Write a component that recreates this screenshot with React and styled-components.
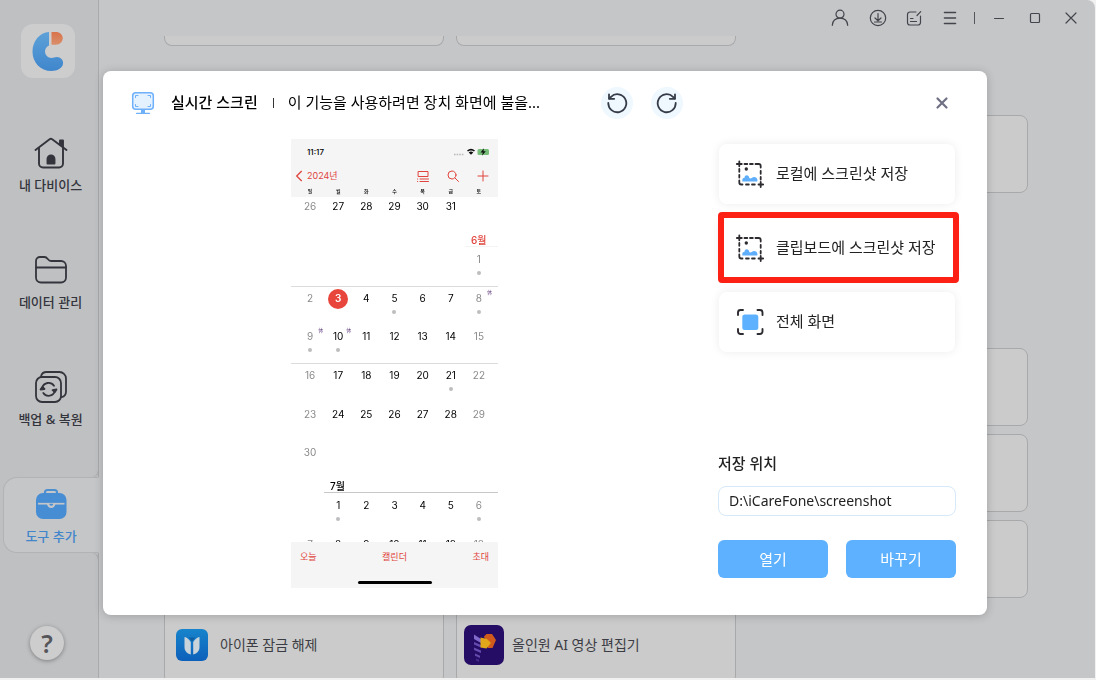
import React from 'react';
import styled, { createGlobalStyle, css } from 'styled-components';

const ui = `"Noto Sans", "Noto Sans CJK KR", sans-serif`;
const ios = `Inter, "Noto Sans CJK KR", sans-serif`;

const GlobalStyle = createGlobalStyle`
  *, *::before, *::after { box-sizing: border-box; }
  body { margin: 0; background: #f1f1f1; font-family: ${ui}; color: #222; }
  button, input { font: inherit; color: inherit; }
  button { padding: 0; border: 0; background: none; cursor: pointer; }
  svg { display: block; flex: none; }
`;

/* ---------- application window ---------- */

const Shell = styled.div`
  display: flex;
  height: calc(100vh - 2px);
  margin-right: 1px;
  overflow: hidden;
  border-top-right-radius: 8px;
  background: #c5c6c8;
`;

const Sidebar = styled.nav`
  display: flex;
  flex-direction: column;
  flex: none;
  width: 99px;
  padding: 24px 0 18px 3px;
  border-right: 1px solid #a9aaac;
  background: #bfc0c2;
`;

const Logo = styled.div`
  display: grid;
  place-items: center;
  width: 54px;
  height: 54px;
  margin: 0 0 48px 18px;
  border-radius: 12px;
  background: #cdcdce;
`;

const NavList = styled.div`
  display: flex;
  flex-direction: column;
  gap: 41px;
`;

const activeTab = css`
  margin-right: -1px;
  border-color: #b2b3b5;
  border-right-color: transparent;
  border-radius: 14px 0 0 14px;
  background: #c5c6c8;
  color: #4185cb;

  &::before, &::after {
    content: '';
    position: absolute;
    right: -1px;
    width: 8px;
    height: 8px;
    border-right: 1px solid #a9aaac;
    background: #bfc0c2;
  }
  &::before { top: -8px; border-bottom: 1px solid #b2b3b5; border-bottom-right-radius: 8px; }
  &::after { bottom: -8px; border-top: 1px solid #b2b3b5; border-top-right-radius: 8px; }
`;

const NavItem = styled.button`
  position: relative;
  display: flex;
  flex-direction: column;
  align-items: center;
  gap: 4px;
  height: 76px;
  padding-top: 8px;
  border: 1px solid transparent;
  color: #33343c;
  font-size: 13px;
  font-weight: 500;
  line-height: 20px;
  white-space: nowrap;
  ${p => p.$active && activeTab}
`;

const HelpButton = styled.button`
  width: 34px;
  height: 34px;
  margin-top: auto;
  margin-left: 27px;
  border-radius: 50%;
  background: #cdcdce;
  box-shadow: 0 1px 4px rgba(0, 0, 0, 0.35);
  color: #55565a;
  font-size: 25px;
  font-weight: 600;
  line-height: 34px;
`;

const Main = styled.main`
  display: flex;
  flex: 1;
  flex-direction: column;
  min-width: 0;
`;

const TitleBar = styled.header`
  display: flex;
  flex: none;
  justify-content: flex-end;
  align-items: center;
  height: 36px;
  padding-right: 6px;
  color: #44454c;
`;

const WindowButton = styled.button`
  display: grid;
  place-items: center;
  width: ${p => (p.$wide ? 40 : 36)}px;
  height: 36px;
`;

const BarDivider = styled.span`
  width: 1px;
  height: 12px;
  margin: 0 6px;
  background: #55565c;
`;

const ToolArea = styled.div`
  display: flex;
  flex: 1;
  flex-direction: column;
  gap: 69px;
  min-height: 0;
  overflow: hidden;
  padding: 0 67px 0 65px;
`;

const ToolGrid = styled.section`
  display: grid;
  flex: none;
  grid-template-columns: repeat(3, 1fr);
  gap: 8px 12px;
`;

const ToolCard = styled.div`
  display: flex;
  align-items: center;
  height: 78px;
  border: 1px solid #a8a9ab;
  border-radius: 8px;
  background: #cbcbcb;
  color: #3c3d44;
  font-size: 14px;
  line-height: 20px;
  ${p => p.$cut && css`
    height: 10px;
    border-top: 0;
    border-radius: 0 0 8px 8px;
  `}
`;

const ToolIcon = styled.span`
  display: flex;
  justify-content: center;
  width: 55px;
  padding-right: 1px;
`;

/* ---------- dialog ---------- */

const Overlay = styled.div`
  position: fixed;
  inset: 0;
  display: flex;
  align-items: flex-start;
  padding: 71px 109px 0 103px;
`;

const Dialog = styled.section`
  flex: 1;
  min-width: 0;
  border-radius: 8px;
  background: #fff;
  box-shadow: 0 1px 10px rgba(0, 0, 0, 0.2);
`;

const DialogHeader = styled.header`
  display: flex;
  align-items: center;
  height: 64px;
  padding: 0 35px 0 28px;
  color: #000;
  font-size: 15px;
  line-height: 22px;
  white-space: nowrap;
`;

const DialogTitle = styled.h1`
  margin: 0 15px 0 16px;
  padding-bottom: 2px;
  font-size: 15px;
  font-weight: 500;
`;

const TitleDivider = styled.span`
  width: 1px;
  height: 10px;
  margin-right: 14px;
  background: #333;
`;

const Notice = styled.p`
  width: 313px;
  margin: 0;
  padding-bottom: 2px;
`;

const RotateButton = styled.button`
  display: grid;
  place-items: center;
  width: 32px;
  height: 32px;
  margin-right: 18px;
  border-radius: 50%;
  background: #eff7ff;
`;

const CloseButton = styled.button`
  display: grid;
  place-items: center;
  width: 20px;
  height: 20px;
  margin-left: auto;
`;

const DialogBody = styled.div`
  display: flex;
  gap: 32px;
`;

const Stage = styled.div`
  display: flex;
  flex: 1;
  justify-content: center;
  padding: 4px 0 27px;
`;

const SidePanel = styled.div`
  display: flex;
  flex: none;
  flex-direction: column;
  justify-content: space-between;
  width: 269px;
  padding: 9px 31px 37px 0;
`;

const ActionList = styled.div`
  display: flex;
  flex-direction: column;
  gap: 14px;
  padding: 0 1px;
`;

const ActionButton = styled.button`
  position: relative;
  display: flex;
  align-items: center;
  gap: 12px;
  height: 60px;
  padding-left: 17px;
  border-radius: 8px;
  background: #fff;
  box-shadow: 0 0 10px rgba(0, 0, 0, 0.08);
  color: #222;
  font-size: 15px;
  line-height: 22px;
  white-space: nowrap;
  ${p => p.$marked && css`
    &::after {
      content: '';
      position: absolute;
      inset: -6px -4px -5px -1px;
      border: 6px solid #fc2015;
      border-radius: 4px;
    }
  `}
`;

const ActionLabel = styled.span`
  padding-bottom: 2px;
`;

const SaveForm = styled.form`
  display: grid;
  grid-template-columns: 1fr 1fr;
  column-gap: 18px;
  font-size: 15px;
  line-height: 22px;
`;

const SaveLabel = styled.label`
  grid-column: 1 / -1;
  margin-bottom: 12px;
  font-weight: 500;
`;

const PathInput = styled.input`
  grid-column: 1 / -1;
  width: 100%;
  height: 30px;
  margin-bottom: 24px;
  padding: 0 10px 2px;
  border: 1px solid #d5e9fa;
  border-radius: 8px;
  background: #fff;
  font-size: 14px;
`;

const PrimaryButton = styled.button`
  height: 38px;
  border-radius: 6px;
  background: #5eb1ff;
  color: #fff;
`;

/* ---------- mirrored phone ---------- */

const Phone = styled.div`
  display: flex;
  flex-direction: column;
  width: 207px;
  height: 449px;
  overflow: hidden;
  background: #fff;
  color: #000;
  font-family: ${ios};
  font-size: 10px;
  line-height: 14px;
`;

const PhoneTop = styled.div`
  flex: none;
  height: 58px;
  background: #f5f5f5;
`;

const StatusRow = styled.div`
  display: flex;
  align-items: center;
  justify-content: space-between;
  height: 26px;
  padding: 0 8px 0 16px;
  font-size: 8px;
  font-weight: 500;
`;

const PhoneNav = styled.div`
  display: flex;
  align-items: center;
  height: 21px;
  padding: 0 9px 0 4px;
  color: #e0443c;
  font-size: 9px;
`;

const NavYear = styled.span`
  flex: 1;
  margin-left: 4px;
`;

const NavIcons = styled.span`
  display: flex;
  gap: 18px;
`;

const WeekdayRow = styled.div`
  display: grid;
  grid-template-columns: repeat(7, 1fr);
  padding: 0 5px;
  font-size: 5px;
  font-weight: 500;
  line-height: 10px;
  text-align: center;
`;

const Weeks = styled.div`
  display: grid;
  flex: none;
  grid-template-rows: repeat(${p => p.$rows}, 1fr);
  height: ${p => p.$height}px;
`;

const Week = styled.div`
  display: grid;
  grid-template-columns: repeat(7, 1fr);
  align-items: start;
  padding: ${p => (p.$flush ? 0 : 2)}px 5px 0;
  border-top: ${p => (p.$flush ? 0 : 1)}px solid ${p => (p.$line ? '#dcdcdc' : 'transparent')};
`;

const Day = styled.div`
  position: relative;
  display: flex;
  flex-direction: column;
  align-items: center;
  gap: 1px;
  color: ${p => (p.$weekend ? '#8a8a8c' : '#000')};
`;

const DayNumber = styled.span`
  width: 20px;
  height: 20px;
  border-radius: 50%;
  line-height: 19px;
  text-align: center;
  ${p => p.$today && css`
    background: #e8463c;
    color: #fff;
    font-weight: 600;
  `}
`;

const EventDot = styled.span`
  width: 4px;
  height: 4px;
  border-radius: 50%;
  background: #bdbdc0;
`;

const HolidayMark = styled.sup`
  position: absolute;
  top: -1px;
  right: 1px;
  color: #6b4a86;
  font-size: 5px;
  line-height: 8px;
`;

const MonthName = styled.div`
  flex: none;
  height: 14px;
  margin-left: ${p => p.$indent}px;
  padding-left: 6px;
  color: ${p => (p.$red ? '#e0443c' : '#000')};
  border-bottom: 1px solid ${p => (p.$red ? '#f4f4f4' : '#c8c8c8')};
  font-weight: 500;
  line-height: 14px;
`;

const PhoneCalendar = styled.div`
  flex: 1;
  min-height: 0;
  overflow: hidden;
  display: flex;
  flex-direction: column;
`;

const PhoneFooter = styled.div`
  display: flex;
  flex: none;
  flex-direction: column;
  align-items: center;
  justify-content: space-between;
  height: 46px;
  padding: 8px 9px 4px;
  background: #f5f5f5;
`;

const FooterLinks = styled.div`
  display: flex;
  align-self: stretch;
  justify-content: space-between;
  color: #e0443c;
  font-size: 9px;
`;

const HomeBar = styled.span`
  width: 74px;
  height: 3px;
  border-radius: 2px;
  background: #000;
`;

/* ---------- icons ---------- */

const Line = ({ size = 18, w = 1.2, children, box }) => (
  <svg width={size} height={size} viewBox={`0 0 ${box || size} ${box || size}`} fill="none"
    stroke="currentColor" strokeWidth={w} strokeLinecap="round" strokeLinejoin="round">
    {children}
  </svg>
);

const LogoMark = () => (
  <svg width="32" height="40" viewBox="0 0 32 40">
    <defs>
      <linearGradient id="lg" x1="0" y1="0" x2="0" y2="1">
        <stop offset="0" stopColor="#5ea1d8" /><stop offset="1" stopColor="#3f86cc" />
      </linearGradient>
      <linearGradient id="lo" x1="0" y1="0" x2="0" y2="1">
        <stop offset="0" stopColor="#d9734a" /><stop offset="1" stopColor="#d98f6c" />
      </linearGradient>
    </defs>
    <path d="M17 1v13.500C10.800 17 12 26.500 19.500 27c2-.1 3-.9 5.300-.9 4 0 6.700 3 6.200 6.700C30.500 37.500 25 40 19.500 40 8.500 40 .5 31.500.5 20.700.5 10 7.500 1.500 17 1z" fill="url(#lg)" />
    <path d="M19.500 1h4.300c4 0 6.900 2.700 6.900 6.300s-3 6.500-7 6.500h-4.200z" fill="url(#lo)" />
  </svg>
);

const HouseIcon = () => (
  <Line size={36} w={1.9}>
    <path d="M2.500 15 16.600 4.200a2 2 0 0 1 2.600 0L33.500 15" />
    <path d="M6 13v15.500a4 4 0 0 0 4 4h16a4 4 0 0 0 4-4V13" />
    <path d="M27 9.500V5.500h3v6.500" fill="currentColor" />
    <path d="M14.500 28.500V24a3.500 3.500 0 0 1 7 0v4.500z" fill="currentColor" />
  </Line>
);

const FolderIcon = () => (
  <Line size={36} w={1.8}>
    <path d="M3 12.500V9a4 4 0 0 1 4-4h4.500c3.500 0 3 4 6.500 4h10a5 5 0 0 1 5 5v11.500a5 5 0 0 1-5 5H8a5 5 0 0 1-5-5z" />
    <path d="M3 15.500h30" />
  </Line>
);

const BackupIcon = () => (
  <Line size={36} w={1.8}>
    <rect x="3" y="8" width="25" height="25" rx="6" />
    <path d="M8 7.500C8.500 5 10.500 3 13.500 3h12.700A6.500 6.500 0 0 1 33 9.500v13c0 3-1.500 5-4.500 5.700" />
    <path d="M9.300 18.800a6.500 6.500 0 0 1 11.700-2M21.900 22a6.500 6.500 0 0 1-11.600 2" />
    <path d="m7.500 20.500 1.800-2.500 2.200 2zM23.500 20.500l-1.600 2.600-2.300-2z" fill="currentColor" />
  </Line>
);

const ToolboxIcon = () => (
  <svg width="36" height="36" viewBox="0 0 36 36">
    <path d="M12 8V6.500A2.500 2.500 0 0 1 14.500 4h7A2.500 2.500 0 0 1 24 6.500V8" fill="none" stroke="#4a8fd2" strokeWidth="2.200" />
    <rect x="3" y="7" width="30.500" height="26" rx="7" fill="#468dd3" />
    <path d="M5 17.700h26.500" stroke="#c5c6c8" strokeWidth="1.700" />
    <path d="M14 17.700a4.200 4.200 0 0 0 8.400 0z" fill="#c5c6c8" />
    <path d="M16.200 17.700a2 2 0 0 0 4 0z" fill="#468dd3" />
  </svg>
);

const UserIcon = () => (
  <Line size={18} w={1.2}>
    <circle cx="9" cy="5.200" r="4" />
    <path d="M1.300 16.300c.3-4.300 3.300-7.100 7.700-7.100s7.400 2.800 7.700 7.100" />
  </Line>
);
const DownloadIcon = () => (
  <Line size={18} w={1.2}>
    <circle cx="9" cy="9" r="7.700" />
    <path d="M9 4.500v7M6 9l3 2.800L12 9M5.500 13h7" />
  </Line>
);
const NoteIcon = () => (
  <Line size={18} w={1.2}>
    <path d="M11 3H5a2.500 2.500 0 0 0-2.500 2.500v8A2.500 2.500 0 0 0 5 16h8a2.500 2.500 0 0 0 2.500-2.500V7M12 6.500 15.700 2.700M5.500 9.500H8M5.500 12.500h6" />
  </Line>
);
const MenuIcon = () => (
  <Line size={18} w={1.6}><path d="M3.500 3.500h11M3.500 9h11M3.500 14.500h11" /></Line>
);
const MinIcon = () => (<Line size={18} w={1}><path d="M4.500 9.500h9" /></Line>);
const MaxIcon = () => (<Line size={18} w={1.2}><rect x="4.500" y="4.500" width="9" height="9" rx="1" /></Line>);
const ExitIcon = () => (<Line size={18} w={1.2}><path d="m4 4 10 10M14 4 4 14" /></Line>);

const MonitorIcon = () => (
  <svg width="24" height="24" viewBox="0 0 24 24" fill="none" stroke="#6fb0fb" strokeLinecap="round">
    <rect x="1.700" y="1.700" width="20.600" height="16.600" rx="3" fill="#e4f1ff" strokeWidth="1.500" />
    <path d="M4.500 6.500v-2h2.500M17 4.500h2.500v2M4.500 13.500v2H7M17 15.500h2.500v-2" strokeWidth="1" />
    <path d="M12 19v3" strokeWidth="4" strokeLinecap="butt" />
    <path d="M5.500 22.300h13" strokeWidth="1.300" />
  </svg>
);

const RotateIcon = ({ flip }) => (
  <svg width="22" height="22" viewBox="0 0 22 22" fill="none" stroke="#363b48" strokeWidth="1.800"
    strokeLinecap="round" strokeLinejoin="round">
    <g transform={flip ? 'matrix(-1 0 0 1 22 0)' : undefined}>
      <path d="M2.300 10.800A9 9 0 1 0 5 4.800L3.300 6.600" />
      <path d="M3 2.300v4.500h5.200" />
    </g>
  </svg>
);

const CloseIcon = () => (
  <svg width="14" height="14" viewBox="0 0 14 14" stroke="#6f7083" strokeWidth="2.200" strokeLinecap="round">
    <path d="m2.500 2.500 9 9M11.500 2.500l-9 9" />
  </svg>
);

const ShotIcon = () => (
  <svg width="28" height="28" viewBox="0 0 28 28" fill="none" stroke="#2d2b30" strokeWidth="1.800" strokeLinecap="round">
    <path d="M.8 4h5M3.300 1.300v5" />
    <path d="M22.500 24.500h4.700M24.700 22v5" />
    <path d="M8.500 4h2.800M14 4h2.800M19.500 4h3.200a2 2 0 0 1 2 2v1.500M24.700 10.800v3M24.700 17v2.500" />
    <path d="M3.300 9v2.800M3.300 14.800v2.800M3.300 20.500v2a2 2 0 0 0 2 2h1.200M10 24.500h2.800M16 24.500h2.800" />
    <circle cx="10.300" cy="9" r="1.700" fill="#2d2b30" stroke="none" />
    <path d="M6.300 21.500v-1.600c0-1.500 1.200-2.200 2.200-2.200 0-3.300 4.300-3.300 4.600-.2.400 1.300 1.800 1.300 3 .3 1.500-1.500 5.400-.7 5.400 2.700 0 .7-.4 1-1 1z" fill="#5eaefb" stroke="none" />
  </svg>
);

const FullIcon = () => (
  <svg width="28" height="28" viewBox="0 0 28 28" fill="none" stroke="#2d2b30" strokeWidth="1.900" strokeLinecap="round">
    <path d="M2 7V4.500a2.500 2.500 0 0 1 2.500-2.500H7M21.500 2h2.500a2.500 2.500 0 0 1 2.500 2.500V7M26.500 21v2.500A2.500 2.500 0 0 1 24 26h-2.500M7 26H4.500A2.500 2.500 0 0 1 2 23.500V21" />
    <rect x="6.300" y="6.500" width="16" height="15.500" rx="2.500" fill="#5eb1ff" stroke="none" />
  </svg>
);

const UnlockAppIcon = () => (
  <svg width="32" height="32" viewBox="0 0 32 32">
    <defs><linearGradient id="ua" x1="0" y1="0" x2="0" y2="1">
      <stop offset="0" stopColor="#1784cc" /><stop offset="1" stopColor="#0d60ba" />
    </linearGradient></defs>
    <rect width="32" height="32" rx="6" fill="url(#ua)" />
    <path d="M8.500 8c2.300.5 4.800 2.300 6.300 5v12.500c-4-.8-6.300-3.700-6.300-7.500zM23.500 8c-2.300.5-4.800 2.300-6.300 5v12.500c4-.8 6.300-3.700 6.300-7.500z" fill="#c9d3da" />
    <path d="M13 8.500h6l-3 4z" fill="#0e5e9f" />
  </svg>
);

const VideoAppIcon = () => (
  <svg width="40" height="40" viewBox="0 0 40 40">
    <rect width="40" height="40" rx="7" fill="#250d65" />
    <path d="M10 9.500 17 14v4l-7-4z" fill="#8168cb" />
    <path d="m10 17 7 3v2.500l-7-3zM10 22.500l7 3V28l-7-3zM11 28.500l5 2.200V33l-5-2.200z" fill="#654bb0" />
    <path d="m12 33.500 3 1.300v2l-3-1.300z" fill="#442c91" />
    <path d="M20 11.500 22.500 9H28l4 6-3.500 8H24z" fill="#d15b1c" />
    <path d="m16.500 12.500 6.500 1.500 4 4-4.500 5.500-6-1z" fill="#e1a61a" />
  </svg>
);

const StatusIcons = () => (
  <svg width="37" height="10" viewBox="0 0 37 10">
    <path d="M1 7.500h10" stroke="#b9b9b9" strokeWidth="1.300" strokeDasharray="1.600 1" />
    <path d="M14 3.500q4-3.300 8 0l-1 1.100q-3-2.400-6 0zM15.700 5.400q2.300-1.800 4.600 0L18 7.800z" fill="#111" />
    <rect x="24.500" y="2" width="11.500" height="6" rx="1.500" fill="#76bd78" />
    <path d="M31 1.300 27.500 5.500h2.300L29 8.700l3.800-4.400h-2.300z" fill="#111" />
  </svg>
);

const BackIcon = () => (
  <svg width="8" height="12" viewBox="0 0 8 12" fill="none" stroke="currentColor" strokeWidth="1.300"><path d="M6.700 1 1.700 6l5 5" /></svg>
);
const ListIcon = () => (
  <Line size={12} w={1}><path d="M1.500 1.500h9.500v5H1.500zM.5 9h.2M3 9h8.500M.5 11.500h.2M3 11.500h8.500" /></Line>
);
const FindIcon = () => (
  <Line size={12} w={1}><circle cx="5" cy="5" r="4" /><path d="m8 8 3.500 3.500" /></Line>
);
const PlusIcon = () => (<Line size={12} w={1}><path d="M6 1v10M1 6h10" /></Line>);

/* ---------- data ---------- */

const nav = [
  { label: '내 다비이스', Icon: HouseIcon },
  { label: '데이터 관리', Icon: FolderIcon },
  { label: '백업 & 복원', Icon: BackupIcon },
  { label: '도구 추가', Icon: ToolboxIcon, active: true },
];

const windowButtons = [
  { label: '계정', Icon: UserIcon, wide: true },
  { label: '다운로드', Icon: DownloadIcon },
  { label: '피드백', Icon: NoteIcon },
  { label: '메뉴', Icon: MenuIcon },
];
const frameButtons = [
  { label: '최소화', Icon: MinIcon },
  { label: '최대화', Icon: MaxIcon },
  { label: '닫기', Icon: ExitIcon },
];

const actions = [
  { label: '로컬에 스크린샷 저장', Icon: ShotIcon },
  { label: '클립보드에 스크린샷 저장', Icon: ShotIcon, marked: true },
  { label: '전체 화면', Icon: FullIcon },
];

const may = [{ days: [26, 27, 28, 29, 30, 31, null], flush: true }];
const june = [
  { days: [null, null, null, null, null, null, 1], dots: [1] },
  { days: [2, 3, 4, 5, 6, 7, 8], dots: [5, 8], marks: [8], line: true, today: 3 },
  { days: [9, 10, 11, 12, 13, 14, 15], dots: [9, 10], marks: [9, 10] },
  { days: [16, 17, 18, 19, 20, 21, 22], dots: [21], line: true },
  { days: [23, 24, 25, 26, 27, 28, 29] },
  { days: [30, null, null, null, null, null, null] },
];
const july = [
  { days: [null, 1, 2, 3, 4, 5, 6], dots: [1, 6] },
  { days: [7, 8, 9, 10, 11, 12, 13] },
];

function Month({ weeks, height }) {
  return (
    <Weeks $rows={weeks.length} $height={height}>
      {weeks.map((w, i) => (
        <Week key={i} $line={w.line} $flush={w.flush}>
          {w.days.map((d, c) => (
            <Day key={c} $weekend={c === 0 || c === 6}>
              {d && <DayNumber $today={w.today === d}>{d}</DayNumber>}
              {w.dots?.includes(d) && <EventDot />}
              {w.marks?.includes(d) && <HolidayMark>休</HolidayMark>}
            </Day>
          ))}
        </Week>
      ))}
    </Weeks>
  );
}

function PhoneScreen() {
  return (
    <Phone>
      <PhoneTop>
        <StatusRow><span>11:17</span><StatusIcons /></StatusRow>
        <PhoneNav>
          <BackIcon />
          <NavYear>2024년</NavYear>
          <NavIcons><ListIcon /><FindIcon /><PlusIcon /></NavIcons>
        </PhoneNav>
        <WeekdayRow>{[...'일월화수목금토'].map(d => <span key={d}>{d}</span>)}</WeekdayRow>
      </PhoneTop>
      <PhoneCalendar>
        <Month weeks={may} height={36} />
        <MonthName $red $indent={174}>6월</MonthName>
        <Month weeks={june} height={232} />
        <MonthName $indent={33}>7월</MonthName>
        <Month weeks={july} height={77} />
      </PhoneCalendar>
      <PhoneFooter>
        <FooterLinks><span>오늘</span><span>캘린더</span><span>초대</span></FooterLinks>
        <HomeBar />
      </PhoneFooter>
    </Phone>
  );
}

const blanks = n => Array.from({ length: n }, (_, i) => <ToolCard key={i} />);

export default function App() {
  return (
    <>
      <GlobalStyle />
      <Shell>
        <Sidebar>
          <Logo><LogoMark /></Logo>
          <NavList>
            {nav.map(({ label, Icon, active }) => (
              <NavItem key={label} $active={active}><Icon />{label}</NavItem>
            ))}
          </NavList>
          <HelpButton>?</HelpButton>
        </Sidebar>
        <Main>
          <TitleBar>
            {windowButtons.map(({ label, Icon, wide }) => (
              <WindowButton key={label} $wide={wide} aria-label={label}><Icon /></WindowButton>
            ))}
            <BarDivider />
            {frameButtons.map(({ label, Icon }) => (
              <WindowButton key={label} aria-label={label}><Icon /></WindowButton>
            ))}
          </TitleBar>
          <ToolArea>
            <ToolGrid><ToolCard $cut /><ToolCard $cut /></ToolGrid>
            <ToolGrid>{blanks(5)}</ToolGrid>
            <ToolGrid>
              {blanks(9)}
              <ToolCard><ToolIcon><UnlockAppIcon /></ToolIcon>아이폰 잠금 해제</ToolCard>
              <ToolCard><ToolIcon><VideoAppIcon /></ToolIcon>올인원 AI 영상 편집기</ToolCard>
            </ToolGrid>
          </ToolArea>
        </Main>
      </Shell>
      <Overlay>
        <Dialog role="dialog" aria-labelledby="dialog-title">
          <DialogHeader>
            <MonitorIcon />
            <DialogTitle id="dialog-title">실시간 스크린</DialogTitle>
            <TitleDivider />
            <Notice>이 기능을 사용하려면 장치 화면에 불을...</Notice>
            <RotateButton aria-label="왼쪽으로 회전"><RotateIcon /></RotateButton>
            <RotateButton aria-label="오른쪽으로 회전"><RotateIcon flip /></RotateButton>
            <CloseButton aria-label="닫기"><CloseIcon /></CloseButton>
          </DialogHeader>
          <DialogBody>
            <Stage><PhoneScreen /></Stage>
            <SidePanel>
              <ActionList>
                {actions.map(({ label, Icon, marked }) => (
                  <ActionButton key={label} $marked={marked}><Icon /><ActionLabel>{label}</ActionLabel></ActionButton>
                ))}
              </ActionList>
              <SaveForm onSubmit={e => e.preventDefault()}>
                <SaveLabel htmlFor="save-path">저장 위치</SaveLabel>
                <PathInput id="save-path" defaultValue="D:\iCareFone\screenshot" />
                <PrimaryButton type="button">열기</PrimaryButton>
                <PrimaryButton type="button">바꾸기</PrimaryButton>
              </SaveForm>
            </SidePanel>
          </DialogBody>
        </Dialog>
      </Overlay>
    </>
  );
}
